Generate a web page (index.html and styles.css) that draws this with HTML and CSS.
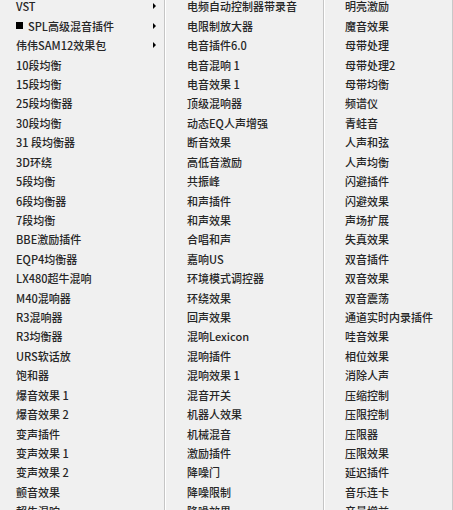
FILE: index.html
```html
<!DOCTYPE html>
<html lang="zh-CN">
<head>
<meta charset="utf-8">
<title>插件菜单</title>
<link rel="stylesheet" href="styles.css">
</head>
<body>
<div class="menu">
  <ul class="col col-1">
    <li class="item sub">VST<span class="arrow"></span></li>
    <li class="item sub"><span class="sq"></span>SPL高级混音插件<span class="arrow"></span></li>
    <li class="item sub">伟伟SAM12效果包<span class="arrow"></span></li>
    <li class="item">10段均衡</li>
    <li class="item">15段均衡</li>
    <li class="item">25段均衡器</li>
    <li class="item">30段均衡</li>
    <li class="item">31 段均衡器</li>
    <li class="item">3D环绕</li>
    <li class="item">5段均衡</li>
    <li class="item">6段均衡器</li>
    <li class="item">7段均衡</li>
    <li class="item">BBE激励插件</li>
    <li class="item">EQP4均衡器</li>
    <li class="item">LX480超牛混响</li>
    <li class="item">M40混响器</li>
    <li class="item">R3混响器</li>
    <li class="item">R3均衡器</li>
    <li class="item">URS软话放</li>
    <li class="item">饱和器</li>
    <li class="item">爆音效果 1</li>
    <li class="item">爆音效果 2</li>
    <li class="item">变声插件</li>
    <li class="item">变声效果 1</li>
    <li class="item">变声效果 2</li>
    <li class="item">颤音效果</li>
    <li class="item">超牛混响</li>
  </ul>
  <ul class="col col-2">
    <li class="item">电频自动控制器带录音</li>
    <li class="item">电限制放大器</li>
    <li class="item">电音插件6.0</li>
    <li class="item">电音混响 1</li>
    <li class="item">电音效果 1</li>
    <li class="item">顶级混响器</li>
    <li class="item">动态EQ人声增强</li>
    <li class="item">断音效果</li>
    <li class="item">高低音激励</li>
    <li class="item">共振峰</li>
    <li class="item">和声插件</li>
    <li class="item">和声效果</li>
    <li class="item">合唱和声</li>
    <li class="item">嘉响US</li>
    <li class="item">环境模式调控器</li>
    <li class="item">环绕效果</li>
    <li class="item">回声效果</li>
    <li class="item">混响Lexicon</li>
    <li class="item">混响插件</li>
    <li class="item">混响效果 1</li>
    <li class="item">混音开关</li>
    <li class="item">机器人效果</li>
    <li class="item">机械混音</li>
    <li class="item">激励插件</li>
    <li class="item">降噪门</li>
    <li class="item">降噪限制</li>
    <li class="item">降噪效果</li>
  </ul>
  <ul class="col col-3">
    <li class="item">明亮激励</li>
    <li class="item">魔音效果</li>
    <li class="item">母带处理</li>
    <li class="item">母带处理2</li>
    <li class="item">母带均衡</li>
    <li class="item">频谱仪</li>
    <li class="item">青蛙音</li>
    <li class="item">人声和弦</li>
    <li class="item">人声均衡</li>
    <li class="item">闪避插件</li>
    <li class="item">闪避效果</li>
    <li class="item">声场扩展</li>
    <li class="item">失真效果</li>
    <li class="item">双音插件</li>
    <li class="item">双音效果</li>
    <li class="item">双音震荡</li>
    <li class="item">通道实时内录插件</li>
    <li class="item">哇音效果</li>
    <li class="item">相位效果</li>
    <li class="item">消除人声</li>
    <li class="item">压缩控制</li>
    <li class="item">压限控制</li>
    <li class="item">压限器</li>
    <li class="item">压限效果</li>
    <li class="item">延迟插件</li>
    <li class="item">音乐连卡</li>
    <li class="item">音量增益</li>
  </ul>
</div>
</body>
</html>
```
FILE: styles.css
```css
html, body {
  margin: 0;
  padding: 0;
  height: 100%;
  overflow: hidden;
  background: #f0f0f0;
}

.menu {
  display: grid;
  grid-template-columns: 165px 159px 1fr;
  margin-top: -3.4px;
  height: 530px;
  font-family: "Noto Sans CJK SC", "Microsoft YaHei", sans-serif;
  font-size: 11px;
  font-weight: 500;
  color: #262626;
  border-right: 1px solid #c8c8c8;
}

.col {
  list-style: none;
  margin: 0;
  padding: 0;
}

.col-1 {
  border-right: 1px solid #c5c5c5;
  padding-left: 16px;
}

.col-2 {
  border-left: 1px solid #ffffff;
  border-right: 1px solid #c5c5c5;
  padding-left: 21px;
}

.col-3 {
  border-left: 1px solid #ffffff;
  padding-left: 20px;
}

.item {
  height: 19.43px;
  line-height: 12px;
  white-space: nowrap;
  display: flex;
  align-items: center;
  position: relative;
}

.sq {
  width: 7px;
  height: 7px;
  background: #000;
  margin-right: 5px;
  flex: none;
}

.arrow {
  position: absolute;
  right: 8px;
  top: 50%;
  margin-top: -3px;
  width: 0;
  height: 0;
  border-left: 3px solid #000;
  border-top: 3px solid transparent;
  border-bottom: 3px solid transparent;
}
```
